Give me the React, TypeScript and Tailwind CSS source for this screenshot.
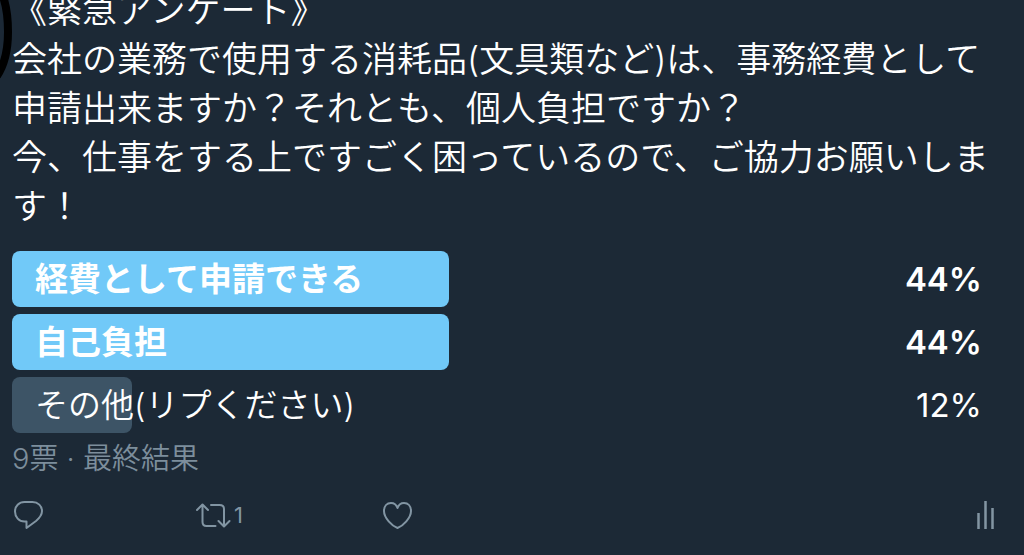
import type { ReactNode } from "react";

type Option = { label: string; percent: number; width: string; leading: boolean };

const options: Option[] = [
  { label: "経費として申請できる", percent: 44, width: "w-[43.7%]", leading: true },
  { label: "自己負担", percent: 44, width: "w-[43.7%]", leading: true },
  { label: "その他(リプください)", percent: 12, width: "w-[12%]", leading: false },
];

function Icon({ children }: { children: ReactNode }) {
  return (
    <svg
      viewBox="0 0 36 30"
      className="h-[30px] w-9 shrink-0"
      fill="none"
      stroke="currentColor"
      strokeWidth="2"
      strokeLinecap="round"
      strokeLinejoin="round"
      aria-hidden="true"
    >
      {children}
    </svg>
  );
}

function PollRow({ option }: { option: Option }) {
  return (
    <li
      className={`relative flex h-14 items-center justify-between pr-[30px] pl-[23px] text-[33px] leading-[40px] ${
        option.leading ? "font-semibold" : "font-[350]"
      }`}
    >
      <span
        className={`absolute inset-y-0 left-0 rounded-lg ${option.width} ${
          option.leading ? "bg-[#71c9f8]" : "bg-[#3d5466]"
        }`}
      />
      <span className="relative">{option.label}</span>
      <span className={`relative ${option.leading ? "" : "font-normal"}`}>{option.percent}%</span>
    </li>
  );
}

export default function App() {
  return (
    <main className="relative min-h-screen overflow-hidden bg-[#1c2936] pl-3 font-['Inter','Noto_Sans_CJK_JP',sans-serif] text-white">
      <svg
        viewBox="0 0 16 90"
        className="absolute top-0 left-0 h-[90px] w-4"
        fill="none"
        stroke="#000"
        strokeWidth="8"
        aria-hidden="true"
      >
        <path d="M-1 -12C5 -2 8 14 8 32C8 50 5 64 -3 76" />
      </svg>
      <article>
        <p className="relative -mt-3.5 text-[35px] leading-[49px] font-[350]">
          《緊急アンケート》
          <br />
          会社の業務で使用する消耗品(文具類など)は、事務経費として
          <br />
          申請出来ますか？それとも、個人負担ですか？
          <br />
          今、仕事をする上ですごく困っているので、ご協力お願いします！
        </p>
        <ul className="mt-5 flex flex-col gap-[7px] pr-3">
          {options.map((option) => (
            <PollRow key={option.label} option={option} />
          ))}
        </ul>
        <p className="mt-1 text-[29px] leading-[44px] font-[350] text-[#7d8e9c]">9票 · 最終結果</p>
        <div className="mt-[19px] flex h-[30px] items-center pr-[22px] text-[#8295a3]">
          <button type="button" aria-label="返信" className="flex w-[184px] items-center">
            <Icon>
              <path d="M12.500 2H20.500C26 2 30 6 30 11C30 15 27.500 18 24 21L14.500 28V21.500H12.500C7 21.500 3 17 3 11.500C3 6 7 2 12.500 2Z" />
            </Icon>
          </button>
          <button
            type="button"
            aria-label="リツイート 1"
            className="flex w-[184px] items-center gap-0.5 text-[22px] leading-[30px] font-normal"
          >
            <Icon>
              <path d="M1 10L6.500 4.500L12 10M6.500 5V22Q6.500 26 10.500 26H19.500M15 5H23.500Q28 5 28 9V26M22.500 21L28 26.500L33.500 21" />
            </Icon>
            <span>1</span>
          </button>
          <button type="button" aria-label="いいね" className="flex items-center">
            <Icon>
              <path d="M17.500 28C12 26 4 18 4 11C4 6 7 3 11 3C14 3 16.500 5 17.500 8C18.500 5 21 3 24 3C28 3 31 6 31 11C31 18 23 26 17.500 28Z" />
            </Icon>
          </button>
          <button type="button" aria-label="アナリティクス" className="ml-auto flex items-center">
            <Icon>
              <path strokeWidth="2.5" strokeLinecap="butt" d="M12.500 13V29M19.500 1V29M26.500 8V29" />
            </Icon>
          </button>
        </div>
      </article>
    </main>
  );
}
